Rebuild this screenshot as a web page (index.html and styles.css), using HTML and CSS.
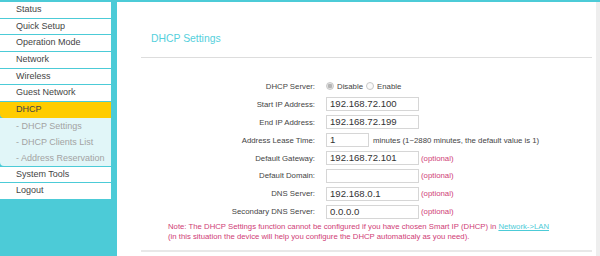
FILE: index.html
```html
<!DOCTYPE html>
<html>
<head>
<meta charset="utf-8">
<link rel="stylesheet" href="styles.css">
</head>
<body>
<div class="page">
  <aside class="sidebar">
    <ul class="menu">
      <li class="item">Status</li>
      <li class="item">Quick Setup</li>
      <li class="item">Operation Mode</li>
      <li class="item">Network</li>
      <li class="item">Wireless</li>
      <li class="item">Guest Network</li>
      <li class="item active">DHCP</li>
      <li class="sub">
        <div class="subitem">- DHCP Settings</div>
        <div class="subitem">- DHCP Clients List</div>
        <div class="subitem">- Address Reservation</div>
      </li>
      <li class="item">System Tools</li>
      <li class="item">Logout</li>
    </ul>
  </aside>
  <main class="content">
    <h1 class="title">DHCP Settings</h1>
    <div class="rule"></div>
    <div class="form">
      <div class="label">DHCP Server:</div>
      <div class="field">
        <span class="radio checked"></span><span class="rtext">Disable</span>
        <span class="radio"></span><span class="rtext">Enable</span>
      </div>

      <div class="label">Start IP Address:</div>
      <div class="field"><span class="input">192.168.72.100</span></div>

      <div class="label">End IP Address:</div>
      <div class="field"><span class="input">192.168.72.199</span></div>

      <div class="label">Address Lease Time:</div>
      <div class="field"><span class="input short">1</span><span class="hint">minutes (1~2880 minutes, the default value is 1)</span></div>

      <div class="label">Default Gateway:</div>
      <div class="field"><span class="input">192.168.72.101</span><span class="opt">(optional)</span></div>

      <div class="label">Default Domain:</div>
      <div class="field"><span class="input"></span><span class="opt">(optional)</span></div>

      <div class="label">DNS Server:</div>
      <div class="field"><span class="input">192.168.0.1</span><span class="opt">(optional)</span></div>

      <div class="label">Secondary DNS Server:</div>
      <div class="field"><span class="input">0.0.0.0</span><span class="opt">(optional)</span></div>
    </div>
    <p class="note">Note: The DHCP Settings function cannot be configured if you have chosen Smart IP (DHCP) in <a class="link">Network-&gt;LAN</a><br>(in this situation the device will help you configure the DHCP automaticaly as you need).</p>
    <div class="rule bottom"></div>
  </main>
  <div class="rail"></div>
</div>
</body>
</html>
```

FILE: styles.css
```css
html, body {
  margin: 0;
  padding: 0;
  background: #ffffff;
  font-family: "Liberation Sans", Arial, sans-serif;
}

.page {
  display: flex;
  width: 600px;
  height: 256px;
  overflow: hidden;
  border-top: 2px solid #4ccbd7;
  box-sizing: border-box;
}

.sidebar {
  width: 117px;
  flex: none;
  background: #4ccbd7;
}

.menu {
  list-style: none;
  margin: 0;
  padding: 0;
  width: 111px;
  display: flex;
  flex-direction: column;
  gap: 1px;
}

.item {
  height: 15.67px;
  line-height: 15.67px;
  background: #ffffff;
  color: #444;
  font-size: 9px;
  padding-left: 16px;
}

.item.active {
  background: #ffcc00;
  margin-bottom: -1px;
  border-bottom-left-radius: 4px;
}

.sub {
  background: #e1f6f8;
  border-bottom-left-radius: 4px;
}

.subitem {
  height: 16px;
  line-height: 16px;
  font-size: 9px;
  color: #a3a3a3;
  padding-left: 16px;
}

.content {
  flex: 1;
  padding: 0 4px 0 24px;
  display: flex;
  flex-direction: column;
}

.title {
  margin: 0;
  padding: 30px 0 0 10px;
  height: 25px;
  font-size: 10.4px;
  font-weight: normal;
  color: #55d0dc;
  line-height: 14px;
}

.rule {
  height: 1px;
  background: #dddddd;
}

.rule.bottom {
  height: 2px;
  background: #e8e8e8;
  margin-top: 8px;
}

.form {
  display: grid;
  grid-template-columns: 174px auto;
  grid-auto-rows: 17.9px;
  column-gap: 11px;
  margin-top: 19.5px;
  align-items: center;
}

.label {
  text-align: right;
  font-size: 7.8px;
  color: #444;
}

.field {
  display: flex;
  align-items: center;
  font-size: 7.8px;
  color: #444;
}

.input {
  box-sizing: border-box;
  width: 93px;
  height: 14px;
  border: 1px solid #d6d6d6;
  background: #fff;
  font-size: 9.6px;
  line-height: 12px;
  padding-left: 3px;
  color: #333;
}

.input.short {
  width: 43px;
}

.hint {
  margin-left: 4px;
  color: #444;
}

.opt {
  margin-left: 2px;
  color: #cf3d76;
}

.radio {
  box-sizing: border-box;
  width: 8px;
  height: 8px;
  border-radius: 50%;
  border: 1px solid #c8c8c8;
  background: #fafafa;
  margin-right: 3px;
}

.radio.checked {
  background: radial-gradient(circle, #b5b5b5 0 2px, #e3e3e3 2.5px);
}

.rtext {
  color: #444;
  margin-right: 3px;
}

.note {
  margin: 1px 0 0 27px;
  font-size: 7.75px;
  line-height: 10px;
  color: #cf3d76;
}

.link {
  color: #4ccbd7;
  text-decoration: underline;
}

.rail {
  width: 4px;
  flex: none;
  background: #eeeeee;
}
```
